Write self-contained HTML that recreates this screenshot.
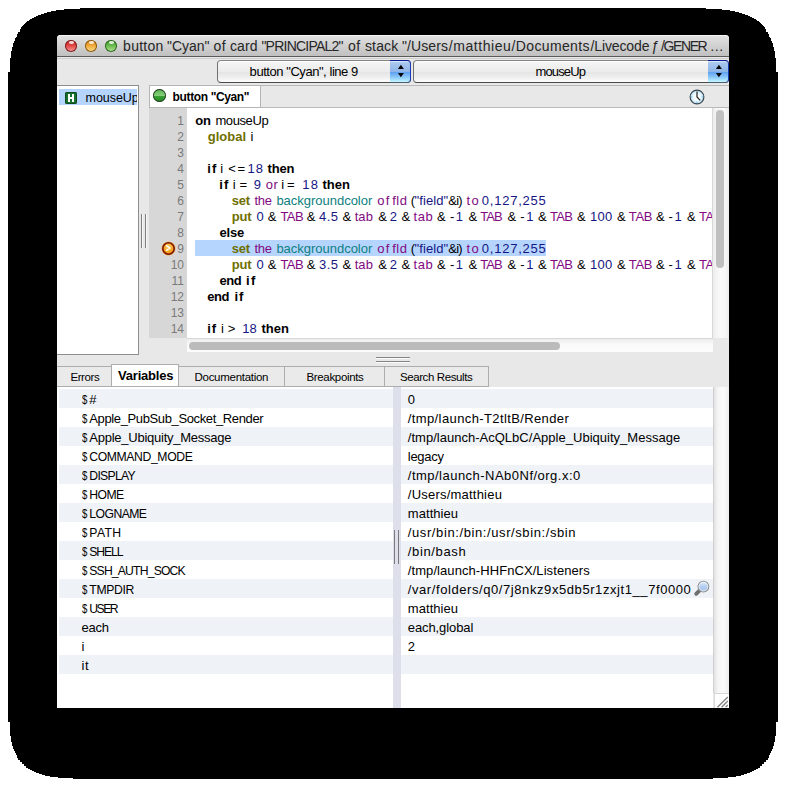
<!DOCTYPE html><html><head><meta charset="utf-8"><style>
html,body{margin:0;padding:0}
body{width:786px;height:787px;position:relative;overflow:hidden;background:#fff;font-family:"Liberation Sans",sans-serif}
.a{position:absolute}
.t{position:absolute;white-space:pre;line-height:20px;height:20px}
</style></head><body>
<svg class="a" style="left:0;top:0" width="786" height="787"><path d="M80 8h626v1h-626zM64 9h658v1h-658zM56 10h674v1h-674zM51 11h684v1h-684zM47 12h692v1h-692zM44 13h698v1h-698zM41 14h704v1h-704zM38 15h710v1h-710zM36 16h714v1h-714zM34 17h718v1h-718zM32 18h722v1h-722zM30 19h726v1h-726zM29 20h728v1h-728zM27 21h732v1h-732zM26 22h734v1h-734zM25 23h736v1h-736zM24 24h738v1h-738zM23 25h740v1h-740zM22 26h742v1h-742zM21 27h744v1h-744zM21 28h744v1h-744zM20 29h746v1h-746zM20 30h746v1h-746zM20 31h746v1h-746zM18 32h750v1h-750zM18 33h750v1h-750zM17 34h752v1h-752zM17 35h752v1h-752zM17 36h752v1h-752zM16 37h754v1h-754zM15 38h756v1h-756zM15 39h756v1h-756zM15 40h756v1h-756zM14 41h758v1h-758zM14 42h758v1h-758zM13 43h760v1h-760zM13 44h760v1h-760zM13 45h760v1h-760zM13 46h760v1h-760zM12 47h762v1h-762zM12 48h762v1h-762zM12 49h762v1h-762zM12 50h762v1h-762zM11 51h764v1h-764zM11 52h764v1h-764zM11 53h764v1h-764zM11 54h764v1h-764zM11 55h764v1h-764zM11 56h764v1h-764zM11 57h764v1h-764zM10 58h766v1h-766zM10 59h766v1h-766zM10 60h766v1h-766zM10 61h766v1h-766zM10 62h766v1h-766zM10 63h766v1h-766zM10 64h766v1h-766zM10 65h766v1h-766zM10 66h766v1h-766zM10 67h766v1h-766zM10 68h766v1h-766zM10 69h766v1h-766zM10 70h766v1h-766zM10 71h766v1h-766zM8 72h770v650h-770zM10 722h766v1h-766zM10 723h766v1h-766zM10 724h766v1h-766zM10 725h766v1h-766zM10 726h766v1h-766zM10 727h766v1h-766zM10 728h766v1h-766zM10 729h766v1h-766zM10 730h766v1h-766zM10 731h766v1h-766zM10 732h766v1h-766zM10 733h766v1h-766zM10 734h766v1h-766zM10 735h766v1h-766zM11 736h764v1h-764zM11 737h764v1h-764zM11 738h764v1h-764zM11 739h764v1h-764zM11 740h764v1h-764zM11 741h764v1h-764zM12 742h762v1h-762zM12 743h762v1h-762zM12 744h762v1h-762zM12 745h762v1h-762zM13 746h760v1h-760zM13 747h760v1h-760zM13 748h760v1h-760zM14 749h758v1h-758zM14 750h758v1h-758zM15 751h756v1h-756zM15 752h756v1h-756zM16 753h754v1h-754zM16 754h754v1h-754zM17 755h752v1h-752zM17 756h752v1h-752zM17 757h752v1h-752zM18 758h750v1h-750zM18 759h750v1h-750zM20 760h746v1h-746zM20 761h746v1h-746zM22 762h742v1h-742zM22 763h742v1h-742zM24 764h738v1h-738zM24 765h738v1h-738zM26 766h734v1h-734zM26 767h734v1h-734zM28 768h730v1h-730zM30 769h726v1h-726zM32 770h722v1h-722zM34 771h718v1h-718zM36 772h714v1h-714zM39 773h708v1h-708zM42 774h702v1h-702zM45 775h696v1h-696zM50 776h686v1h-686zM58 777h670v1h-670zM73 778h640v1h-640z" fill="#000" shape-rendering="crispEdges"/></svg>
<div class="a" style="left:57px;top:35px;width:672px;height:673px;background:#e8e8e8;border-radius:4px 4px 0 0;overflow:hidden"></div>
<div class="a" style="left:57px;top:35px;width:672px;height:21px;border-radius:4px 4px 0 0;background:linear-gradient(#e2e2e2,#d8d8d8 30%,#c0c0c0 100%);border-bottom:1px solid #5a5a5a;box-shadow:inset 0 1px 0 #f6f6f6"></div>
<div class="a" style="left:57px;top:58px;width:672px;height:1px;background:#cfcfcf"></div>
<div class="a" style="left:65px;top:40px;width:12px;height:12px;border-radius:50%;background:linear-gradient(#b72525 0%,#de3d3d 40%,#ee6e6e 72%,#f6b0b0 100%);box-shadow:inset 0 0 0 1px #7a2222"></div><div class="a" style="left:68.5px;top:41.2px;width:5px;height:2.6px;border-radius:50%;background:rgba(255,255,255,.8)"></div>
<div class="a" style="left:85px;top:40px;width:12px;height:12px;border-radius:50%;background:linear-gradient(#cf7a12 0%,#eda232 40%,#f6c462 72%,#fae6a0 100%);box-shadow:inset 0 0 0 1px #8a5a14"></div><div class="a" style="left:88.5px;top:41.2px;width:5px;height:2.6px;border-radius:50%;background:rgba(255,255,255,.8)"></div>
<div class="a" style="left:105px;top:40px;width:12px;height:12px;border-radius:50%;background:linear-gradient(#3f8c2c 0%,#5fb548 40%,#8ecd6e 72%,#c6ecb0 100%);box-shadow:inset 0 0 0 1px #2f6a22"></div><div class="a" style="left:108.5px;top:41.2px;width:5px;height:2.6px;border-radius:50%;background:rgba(255,255,255,.8)"></div>
<div id="ti0" class="t" style="left:123.1px;top:35.75px;font-size:14px;color:#262626;font-weight:400;letter-spacing:0.253px;">button</div>
<div id="ti1" class="t" style="left:166.9px;top:35.75px;font-size:14px;color:#262626;font-weight:400;letter-spacing:0.015px;">"Cyan"</div>
<div id="ti2" class="t" style="left:213.4px;top:35.75px;font-size:14px;color:#262626;font-weight:400;letter-spacing:0.613px;">of</div>
<div id="ti3" class="t" style="left:230px;top:35.75px;font-size:14px;color:#262626;font-weight:400;letter-spacing:0.089px;">card</div>
<div id="ti4" class="t" style="left:261.4px;top:35.75px;font-size:14px;color:#262626;font-weight:400;letter-spacing:-0.764px;">"PRINCIPAL2"</div>
<div id="ti5" class="t" style="left:347.9px;top:35.75px;font-size:14px;color:#262626;font-weight:400;letter-spacing:0.513px;">of</div>
<div id="ti6" class="t" style="left:364.9px;top:35.75px;font-size:14px;color:#262626;font-weight:400;letter-spacing:0.178px;">stack</div>
<div id="ti7" class="t" style="left:402px;top:35.75px;font-size:14px;color:#262626;font-weight:400;letter-spacing:0.080px;">"/Users</div>
<div id="ti8" class="t" style="left:448.8px;top:35.75px;font-size:14px;color:#262626;font-weight:400;letter-spacing:0.551px;">/matthieu</div>
<div id="ti9" class="t" style="left:511.6px;top:35.75px;font-size:14px;color:#262626;font-weight:400;letter-spacing:0.344px;">/Documents</div>
<div id="ti10" class="t" style="left:590.5px;top:35.75px;font-size:14px;color:#262626;font-weight:400;letter-spacing:-0.117px;">/Livecode</div>
<div id="ti11" class="t" style="left:651.6px;top:35.75px;font-size:14px;color:#262626;font-weight:400;letter-spacing:0.000px;">ƒ</div>
<div id="ti12" class="t" style="left:661.1px;top:35.75px;font-size:14px;color:#262626;font-weight:400;letter-spacing:-1.418px;">/GENER</div>
<div id="ti13" class="t" style="left:709.8px;top:35.75px;font-size:14px;color:#262626;font-weight:400;letter-spacing:0.000px;">…</div>
<div class="a" style="left:217px;top:60px;width:192px;height:21px;border:1px solid #707070;border-top-color:#858585;border-bottom-color:#4a4a4a;border-radius:4px;background:linear-gradient(#ffffff 0,#f3f3f3 10%,#ececec 50%,#e4e4e4 52%,#f0f0f0 80%,#fdfdfd 100%);overflow:hidden"></div><div class="a" style="left:390px;top:60px;width:20px;height:21px;border-top:1px solid #0a1890;border-right:1px solid #1a38b0;border-bottom:1px solid #4a5a70;border-radius:0 4px 4px 0;background:linear-gradient(#e6f0fb 0,#a9c7ee 8%,#8fb6e9 50%,#5d9ff0 52%,#86c4f8 75%,#b6ecff 95%,#c8fbff 100%)"></div><svg class="a" style="left:397px;top:64px" width="8" height="14"><path d="M0.9 5 L3.9 0.8 L6.9 5 Z M0.9 9 L6.9 9 L3.9 13.2 Z" fill="#050505"/></svg>
<div class="a" style="left:413px;top:60px;width:314px;height:21px;border:1px solid #707070;border-top-color:#858585;border-bottom-color:#4a4a4a;border-radius:4px;background:linear-gradient(#ffffff 0,#f3f3f3 10%,#ececec 50%,#e4e4e4 52%,#f0f0f0 80%,#fdfdfd 100%);overflow:hidden"></div><div class="a" style="left:708px;top:60px;width:20px;height:21px;border-top:1px solid #0a1890;border-right:1px solid #1a38b0;border-bottom:1px solid #4a5a70;border-radius:0 4px 4px 0;background:linear-gradient(#e6f0fb 0,#a9c7ee 8%,#8fb6e9 50%,#5d9ff0 52%,#86c4f8 75%,#b6ecff 95%,#c8fbff 100%)"></div><svg class="a" style="left:715px;top:64px" width="8" height="14"><path d="M0.9 5 L3.9 0.8 L6.9 5 Z M0.9 9 L6.9 9 L3.9 13.2 Z" fill="#050505"/></svg>
<div id="pop1" class="t" style="left:249.6px;top:61.80px;font-size:13px;color:#000;font-weight:400;letter-spacing:-0.447px;">button &quot;Cyan&quot;, line 9</div>
<div id="pop2" class="t" style="left:535.5px;top:61.70px;font-size:13px;color:#000;font-weight:400;letter-spacing:-0.873px;">mouseUp</div>
<div class="a" style="left:57px;top:85px;width:81px;height:268px;background:#fff;border:1px solid #8e8e8e;border-left:none;box-sizing:content-box"></div>
<div class="a" style="left:59px;top:89px;width:78px;height:16px;background:#b5d5ff"></div>
<div class="a" style="left:65px;top:92px;width:12px;height:12px;background:#17702e;border-radius:2px;box-shadow:inset 0 0 0 1px #0c4a1c"></div>
<div class="a" style="left:68px;top:94px;width:2px;height:8px;background:#fff"></div><div class="a" style="left:72px;top:94px;width:2px;height:8px;background:#fff"></div><div class="a" style="left:69px;top:97px;width:4px;height:2px;background:#fff"></div>
<div class="a" style="left:59px;top:86px;width:78px;height:20px;overflow:hidden"><div id="list1" class="t" style="left:26.5px;top:2.17px;font-size:12.5px;color:#000;font-weight:400;letter-spacing:-0.033px;">mouseUp</div>
</div>
<div class="a" style="left:141px;top:214px;width:1px;height:34px;background:#7e7e7e;box-shadow:1px 0 0 #f8f8f8"></div><div class="a" style="left:145px;top:214px;width:1px;height:34px;background:#7e7e7e;box-shadow:1px 0 0 #f8f8f8"></div>
<div class="a" style="left:149px;top:85px;width:580px;height:21px;background:#e8e8e8;border-top:1px solid #b9b9b9;border-bottom:1px solid #b9b9b9;box-sizing:content-box"></div>
<div class="a" style="left:149px;top:85px;width:110px;height:21px;background:#fff;border:1px solid #b5b5b5"></div>
<div class="a" style="left:152.7px;top:89.4px;width:13px;height:13px;border-radius:50%;background:linear-gradient(#5cb850 0%,#6cc262 25%,#86cf7a 50%,#3aa334 53%,#2a942a 80%,#1d781d 100%);box-shadow:inset 0 0 0 1px #2c3a2c"></div>
<div id="tab1" class="t" style="left:172.6px;top:86.54px;font-size:12px;color:#000;font-weight:700;letter-spacing:-0.373px;">button &quot;Cyan&quot;</div>
<svg class="a" style="left:688.5px;top:89px" width="16" height="16" viewBox="0 0 16 16"><defs><radialGradient id="cg" cx="50%" cy="50%" r="55%"><stop offset="0" stop-color="#ffffff"/><stop offset="0.55" stop-color="#eef8ff"/><stop offset="1" stop-color="#8fd0f4"/></radialGradient></defs>
<circle cx="8" cy="8" r="6.9" fill="url(#cg)" stroke="#3c4247" stroke-width="1.1"/><circle cx="2.8" cy="8" r="0.8" fill="#7cc8f0"/><circle cx="13.2" cy="8" r="0.8" fill="#7cc8f0"/><circle cx="8" cy="13.2" r="0.8" fill="#7cc8f0"/><path d="M8 2.6 V8 L11.2 11.4" stroke="#262626" stroke-width="1.25" fill="none"/></svg>
<div class="a" style="left:150px;top:108px;width:562px;height:230px;background:#fff"></div>
<div class="a" style="left:149px;top:108px;width:38px;height:230px;background:#d7d7d7"></div>
<div class="a" style="left:195px;top:240px;width:351px;height:16px;background:#b5d5ff"></div>
<div class="a" style="left:161.5px;top:241.5px;width:13px;height:13px;border-radius:50%;background:radial-gradient(circle at 50% 40%,#ffd070 0,#f7a420 45%,#e87c00 100%);box-shadow:inset 0 0 0 1.6px #7c1500,0 0 0 0.6px #f6b060"></div>
<svg class="a" style="left:162px;top:242px" width="12" height="12"><path d="M4.6 3.7 L8 6 L4.6 8.3" stroke="#fff" stroke-width="1.5" fill="none" stroke-linecap="round" stroke-linejoin="round"/></svg>
<div class="t" style="left:150px;width:34px;text-align:right;top:110.54px;font-size:12px;color:#7a7a7a">1</div>
<div class="t" style="left:150px;width:34px;text-align:right;top:126.54px;font-size:12px;color:#7a7a7a">2</div>
<div class="t" style="left:150px;width:34px;text-align:right;top:142.54px;font-size:12px;color:#7a7a7a">3</div>
<div class="t" style="left:150px;width:34px;text-align:right;top:158.54px;font-size:12px;color:#7a7a7a">4</div>
<div class="t" style="left:150px;width:34px;text-align:right;top:174.54px;font-size:12px;color:#7a7a7a">5</div>
<div class="t" style="left:150px;width:34px;text-align:right;top:190.54px;font-size:12px;color:#7a7a7a">6</div>
<div class="t" style="left:150px;width:34px;text-align:right;top:206.54px;font-size:12px;color:#7a7a7a">7</div>
<div class="t" style="left:150px;width:34px;text-align:right;top:222.54px;font-size:12px;color:#7a7a7a">8</div>
<div class="t" style="left:150px;width:34px;text-align:right;top:238.54px;font-size:12px;color:#7a7a7a">9</div>
<div class="t" style="left:150px;width:34px;text-align:right;top:254.54px;font-size:12px;color:#7a7a7a">10</div>
<div class="t" style="left:150px;width:34px;text-align:right;top:270.54px;font-size:12px;color:#7a7a7a">11</div>
<div class="t" style="left:150px;width:34px;text-align:right;top:286.54px;font-size:12px;color:#7a7a7a">12</div>
<div class="t" style="left:150px;width:34px;text-align:right;top:302.54px;font-size:12px;color:#7a7a7a">13</div>
<div class="t" style="left:150px;width:34px;text-align:right;top:318.54px;font-size:12px;color:#7a7a7a">14</div>
<div class="a" style="left:187px;top:108px;width:525px;height:230px;overflow:hidden">
<div id="c1_0" class="t" style="left:8.199999999999989px;top:3.20px;font-size:13px;color:#000;font-weight:700;letter-spacing:-0.191px;">on</div>
<div id="c1_1" class="t" style="left:28.400000000000006px;top:3.20px;font-size:13px;color:#000;font-weight:400;letter-spacing:-0.390px;">mouseUp</div>
<div id="c2_0" class="t" style="left:20.80000000000001px;top:19.20px;font-size:13px;color:#6f6f00;font-weight:700;letter-spacing:0.004px;">global</div>
<div id="c2_1" class="t" style="left:63.400000000000006px;top:19.20px;font-size:13px;color:#000;font-weight:400;letter-spacing:0.000px;">i</div>
<div id="c4_0" class="t" style="left:20.30000000000001px;top:51.20px;font-size:13px;color:#000;font-weight:700;letter-spacing:1.047px;">if</div>
<div id="c4_1" class="t" style="left:33.30000000000001px;top:51.20px;font-size:13px;color:#000;font-weight:400;letter-spacing:0.000px;">i</div>
<div id="c4_2" class="t" style="left:41.30000000000001px;top:51.20px;font-size:13px;color:#000;font-weight:400;letter-spacing:1.500px;">&lt;=</div>
<div id="c4_3" class="t" style="left:60.400000000000006px;top:51.20px;font-size:13px;color:#161684;font-weight:400;letter-spacing:1.231px;">18</div>
<div id="c4_4" class="t" style="left:80.60000000000002px;top:51.20px;font-size:13px;color:#000;font-weight:700;letter-spacing:-0.184px;">then</div>
<div id="c5_0" class="t" style="left:32.30000000000001px;top:67.20px;font-size:13px;color:#000;font-weight:700;letter-spacing:1.047px;">if</div>
<div id="c5_1" class="t" style="left:45.69999999999999px;top:67.20px;font-size:13px;color:#000;font-weight:400;letter-spacing:0.000px;">i</div>
<div id="c5_2" class="t" style="left:52.400000000000006px;top:67.20px;font-size:13px;color:#000;font-weight:400;letter-spacing:0.000px;">=</div>
<div id="c5_3" class="t" style="left:66.69999999999999px;top:67.20px;font-size:13px;color:#161684;font-weight:400;letter-spacing:0.000px;">9</div>
<div id="c5_4" class="t" style="left:78.69999999999999px;top:67.20px;font-size:13px;color:#820a82;font-weight:400;letter-spacing:0.638px;">or</div>
<div id="c5_5" class="t" style="left:94.30000000000001px;top:67.20px;font-size:13px;color:#000;font-weight:400;letter-spacing:0.000px;">i</div>
<div id="c5_6" class="t" style="left:100px;top:67.20px;font-size:13px;color:#000;font-weight:400;letter-spacing:0.000px;">=</div>
<div id="c5_7" class="t" style="left:115.30000000000001px;top:67.20px;font-size:13px;color:#161684;font-weight:400;letter-spacing:1.231px;">18</div>
<div id="c5_8" class="t" style="left:135.39999999999998px;top:67.20px;font-size:13px;color:#000;font-weight:700;letter-spacing:0.016px;">then</div>
<div id="c6_0" class="t" style="left:44.69999999999999px;top:83.20px;font-size:13px;color:#6f6f00;font-weight:700;letter-spacing:-0.148px;">set</div>
<div id="c6_1" class="t" style="left:67.5px;top:83.20px;font-size:13px;color:#820a82;font-weight:400;letter-spacing:-0.289px;">the</div>
<div id="c6_2" class="t" style="left:89.39999999999998px;top:83.20px;font-size:13px;color:#0e8080;font-weight:400;letter-spacing:-0.016px;">backgroundcolor</div>
<div id="c6_3" class="t" style="left:190.2px;top:83.20px;font-size:13px;color:#820a82;font-weight:400;letter-spacing:1.456px;">of</div>
<div id="c6_4" class="t" style="left:205.2px;top:83.20px;font-size:13px;color:#820a82;font-weight:400;letter-spacing:0.533px;">fld</div>
<div id="c6_5" class="t" style="left:223.8px;top:83.20px;font-size:13px;color:#000;font-weight:400;letter-spacing:0.000px;">(</div>
<div id="c6_6" class="t" style="left:227.60000000000002px;top:83.20px;font-size:13px;color:#161684;font-weight:400;letter-spacing:0.087px;">"field"</div>
<div id="c6_7" class="t" style="left:261.2px;top:83.20px;font-size:13px;color:#000;font-weight:400;letter-spacing:-0.695px;">&amp;i)</div>
<div id="c6_8" class="t" style="left:279.5px;top:83.20px;font-size:13px;color:#820a82;font-weight:400;letter-spacing:1.456px;">to</div>
<div id="c6_9" class="t" style="left:294.8px;top:83.20px;font-size:13px;color:#161684;font-weight:400;letter-spacing:0.770px;">0,127,255</div>
<div id="c7_0" class="t" style="left:44.69999999999999px;top:99.20px;font-size:13px;color:#6f6f00;font-weight:700;letter-spacing:-0.109px;">put</div>
<div id="c7_1" class="t" style="left:69.39999999999998px;top:99.20px;font-size:13px;color:#161684;font-weight:400;letter-spacing:0.000px;">0</div>
<div id="c7_2" class="t" style="left:80.69999999999999px;top:99.20px;font-size:13px;color:#000;font-weight:400;letter-spacing:0.000px;">&amp;</div>
<div id="c7_3" class="t" style="left:93.5px;top:99.20px;font-size:13px;color:#820a82;font-weight:400;letter-spacing:-0.614px;">TAB</div>
<div id="c7_4" class="t" style="left:119.80000000000001px;top:99.20px;font-size:13px;color:#000;font-weight:400;letter-spacing:0.000px;">&amp;</div>
<div id="c7_5" class="t" style="left:132.0px;top:99.20px;font-size:13px;color:#161684;font-weight:400;letter-spacing:0.511px;">4.5</div>
<div id="c7_6" class="t" style="left:155.5px;top:99.20px;font-size:13px;color:#000;font-weight:400;letter-spacing:0.000px;">&amp;</div>
<div id="c7_7" class="t" style="left:167.7px;top:99.20px;font-size:13px;color:#820a82;font-weight:400;letter-spacing:0.061px;">tab</div>
<div id="c7_8" class="t" style="left:191.2px;top:99.20px;font-size:13px;color:#000;font-weight:400;letter-spacing:0.000px;">&amp;</div>
<div id="c7_9" class="t" style="left:202.8px;top:99.20px;font-size:13px;color:#161684;font-weight:400;letter-spacing:0.000px;">2</div>
<div id="c7_10" class="t" style="left:214.39999999999998px;top:99.20px;font-size:13px;color:#000;font-weight:400;letter-spacing:0.000px;">&amp;</div>
<div id="c7_11" class="t" style="left:226.60000000000002px;top:99.20px;font-size:13px;color:#820a82;font-weight:400;letter-spacing:0.561px;">tab</div>
<div id="c7_12" class="t" style="left:250.10000000000002px;top:99.20px;font-size:13px;color:#000;font-weight:400;letter-spacing:0.000px;">&amp;</div>
<div id="c7_13" class="t" style="left:263px;top:99.20px;font-size:13px;color:#000;font-weight:400;letter-spacing:1.500px;"><span style="color:#000">-</span><span style="color:#161684">1</span></div>
<div id="c7_14" class="t" style="left:281.4px;top:99.20px;font-size:13px;color:#000;font-weight:400;letter-spacing:0.000px;">&amp;</div>
<div id="c7_15" class="t" style="left:293.3px;top:99.20px;font-size:13px;color:#820a82;font-weight:400;letter-spacing:-0.914px;">TAB</div>
<div id="c7_16" class="t" style="left:320.4px;top:99.20px;font-size:13px;color:#000;font-weight:400;letter-spacing:0.000px;">&amp;</div>
<div id="c7_17" class="t" style="left:333.29999999999995px;top:99.20px;font-size:13px;color:#000;font-weight:400;letter-spacing:1.500px;"><span style="color:#000">-</span><span style="color:#161684">1</span></div>
<div id="c7_18" class="t" style="left:351.1px;top:99.20px;font-size:13px;color:#000;font-weight:400;letter-spacing:0.000px;">&amp;</div>
<div id="c7_19" class="t" style="left:363px;top:99.20px;font-size:13px;color:#820a82;font-weight:400;letter-spacing:-0.664px;">TAB</div>
<div id="c7_20" class="t" style="left:390px;top:99.20px;font-size:13px;color:#000;font-weight:400;letter-spacing:0.000px;">&amp;</div>
<div id="c7_21" class="t" style="left:403px;top:99.20px;font-size:13px;color:#161684;font-weight:400;letter-spacing:0.298px;">100</div>
<div id="c7_22" class="t" style="left:430px;top:99.20px;font-size:13px;color:#000;font-weight:400;letter-spacing:0.000px;">&amp;</div>
<div id="c7_23" class="t" style="left:441.79999999999995px;top:99.20px;font-size:13px;color:#820a82;font-weight:400;letter-spacing:-0.314px;">TAB</div>
<div id="c7_24" class="t" style="left:469.1px;top:99.20px;font-size:13px;color:#000;font-weight:400;letter-spacing:0.000px;">&amp;</div>
<div id="c7_25" class="t" style="left:481.6px;top:99.20px;font-size:13px;color:#000;font-weight:400;letter-spacing:1.500px;"><span style="color:#000">-</span><span style="color:#161684">1</span></div>
<div id="c7_26" class="t" style="left:500.1px;top:99.20px;font-size:13px;color:#000;font-weight:400;letter-spacing:0.000px;">&amp;</div>
<div id="c7_27" class="t" style="left:511.9px;top:99.20px;font-size:13px;color:#820a82;font-weight:400;letter-spacing:-0.414px;">TAB</div>
<div id="c8_0" class="t" style="left:32.400000000000006px;top:115.20px;font-size:13px;color:#000;font-weight:700;letter-spacing:-0.138px;">else</div>
<div id="c9_0" class="t" style="left:44.69999999999999px;top:131.20px;font-size:13px;color:#6f6f00;font-weight:700;letter-spacing:-0.148px;">set</div>
<div id="c9_1" class="t" style="left:67.5px;top:131.20px;font-size:13px;color:#820a82;font-weight:400;letter-spacing:-0.289px;">the</div>
<div id="c9_2" class="t" style="left:89.39999999999998px;top:131.20px;font-size:13px;color:#0e8080;font-weight:400;letter-spacing:-0.016px;">backgroundcolor</div>
<div id="c9_3" class="t" style="left:190.2px;top:131.20px;font-size:13px;color:#820a82;font-weight:400;letter-spacing:1.456px;">of</div>
<div id="c9_4" class="t" style="left:205.2px;top:131.20px;font-size:13px;color:#820a82;font-weight:400;letter-spacing:0.533px;">fld</div>
<div id="c9_5" class="t" style="left:223.8px;top:131.20px;font-size:13px;color:#000;font-weight:400;letter-spacing:0.000px;">(</div>
<div id="c9_6" class="t" style="left:227.60000000000002px;top:131.20px;font-size:13px;color:#161684;font-weight:400;letter-spacing:0.087px;">"field"</div>
<div id="c9_7" class="t" style="left:261.2px;top:131.20px;font-size:13px;color:#000;font-weight:400;letter-spacing:-0.695px;">&amp;i)</div>
<div id="c9_8" class="t" style="left:279.5px;top:131.20px;font-size:13px;color:#820a82;font-weight:400;letter-spacing:1.456px;">to</div>
<div id="c9_9" class="t" style="left:294.8px;top:131.20px;font-size:13px;color:#161684;font-weight:400;letter-spacing:0.770px;">0,127,255</div>
<div id="c10_0" class="t" style="left:44.69999999999999px;top:147.20px;font-size:13px;color:#6f6f00;font-weight:700;letter-spacing:-0.109px;">put</div>
<div id="c10_1" class="t" style="left:69.39999999999998px;top:147.20px;font-size:13px;color:#161684;font-weight:400;letter-spacing:0.000px;">0</div>
<div id="c10_2" class="t" style="left:80.69999999999999px;top:147.20px;font-size:13px;color:#000;font-weight:400;letter-spacing:0.000px;">&amp;</div>
<div id="c10_3" class="t" style="left:93.5px;top:147.20px;font-size:13px;color:#820a82;font-weight:400;letter-spacing:-0.614px;">TAB</div>
<div id="c10_4" class="t" style="left:119.80000000000001px;top:147.20px;font-size:13px;color:#000;font-weight:400;letter-spacing:0.000px;">&amp;</div>
<div id="c10_5" class="t" style="left:132.0px;top:147.20px;font-size:13px;color:#161684;font-weight:400;letter-spacing:0.511px;">3.5</div>
<div id="c10_6" class="t" style="left:155.5px;top:147.20px;font-size:13px;color:#000;font-weight:400;letter-spacing:0.000px;">&amp;</div>
<div id="c10_7" class="t" style="left:167.7px;top:147.20px;font-size:13px;color:#820a82;font-weight:400;letter-spacing:0.061px;">tab</div>
<div id="c10_8" class="t" style="left:191.2px;top:147.20px;font-size:13px;color:#000;font-weight:400;letter-spacing:0.000px;">&amp;</div>
<div id="c10_9" class="t" style="left:202.8px;top:147.20px;font-size:13px;color:#161684;font-weight:400;letter-spacing:0.000px;">2</div>
<div id="c10_10" class="t" style="left:214.39999999999998px;top:147.20px;font-size:13px;color:#000;font-weight:400;letter-spacing:0.000px;">&amp;</div>
<div id="c10_11" class="t" style="left:226.60000000000002px;top:147.20px;font-size:13px;color:#820a82;font-weight:400;letter-spacing:0.561px;">tab</div>
<div id="c10_12" class="t" style="left:250.10000000000002px;top:147.20px;font-size:13px;color:#000;font-weight:400;letter-spacing:0.000px;">&amp;</div>
<div id="c10_13" class="t" style="left:263px;top:147.20px;font-size:13px;color:#000;font-weight:400;letter-spacing:1.500px;"><span style="color:#000">-</span><span style="color:#161684">1</span></div>
<div id="c10_14" class="t" style="left:281.4px;top:147.20px;font-size:13px;color:#000;font-weight:400;letter-spacing:0.000px;">&amp;</div>
<div id="c10_15" class="t" style="left:293.3px;top:147.20px;font-size:13px;color:#820a82;font-weight:400;letter-spacing:-0.914px;">TAB</div>
<div id="c10_16" class="t" style="left:320.4px;top:147.20px;font-size:13px;color:#000;font-weight:400;letter-spacing:0.000px;">&amp;</div>
<div id="c10_17" class="t" style="left:333.29999999999995px;top:147.20px;font-size:13px;color:#000;font-weight:400;letter-spacing:1.500px;"><span style="color:#000">-</span><span style="color:#161684">1</span></div>
<div id="c10_18" class="t" style="left:351.1px;top:147.20px;font-size:13px;color:#000;font-weight:400;letter-spacing:0.000px;">&amp;</div>
<div id="c10_19" class="t" style="left:363px;top:147.20px;font-size:13px;color:#820a82;font-weight:400;letter-spacing:-0.664px;">TAB</div>
<div id="c10_20" class="t" style="left:390px;top:147.20px;font-size:13px;color:#000;font-weight:400;letter-spacing:0.000px;">&amp;</div>
<div id="c10_21" class="t" style="left:403px;top:147.20px;font-size:13px;color:#161684;font-weight:400;letter-spacing:0.298px;">100</div>
<div id="c10_22" class="t" style="left:430px;top:147.20px;font-size:13px;color:#000;font-weight:400;letter-spacing:0.000px;">&amp;</div>
<div id="c10_23" class="t" style="left:441.79999999999995px;top:147.20px;font-size:13px;color:#820a82;font-weight:400;letter-spacing:-0.314px;">TAB</div>
<div id="c10_24" class="t" style="left:469.1px;top:147.20px;font-size:13px;color:#000;font-weight:400;letter-spacing:0.000px;">&amp;</div>
<div id="c10_25" class="t" style="left:481.6px;top:147.20px;font-size:13px;color:#000;font-weight:400;letter-spacing:1.500px;"><span style="color:#000">-</span><span style="color:#161684">1</span></div>
<div id="c10_26" class="t" style="left:500.1px;top:147.20px;font-size:13px;color:#000;font-weight:400;letter-spacing:0.000px;">&amp;</div>
<div id="c10_27" class="t" style="left:511.9px;top:147.20px;font-size:13px;color:#820a82;font-weight:400;letter-spacing:-0.414px;">TAB</div>
<div id="c11_0" class="t" style="left:32.400000000000006px;top:163.20px;font-size:13px;color:#000;font-weight:700;letter-spacing:-0.462px;">end</div>
<div id="c11_1" class="t" style="left:59.099999999999994px;top:163.20px;font-size:13px;color:#000;font-weight:700;letter-spacing:1.247px;">if</div>
<div id="c12_0" class="t" style="left:20.19999999999999px;top:179.20px;font-size:13px;color:#000;font-weight:700;letter-spacing:-0.462px;">end</div>
<div id="c12_1" class="t" style="left:47.400000000000006px;top:179.20px;font-size:13px;color:#000;font-weight:700;letter-spacing:1.047px;">if</div>
<div id="c14_0" class="t" style="left:20.19999999999999px;top:211.20px;font-size:13px;color:#000;font-weight:700;letter-spacing:1.047px;">if</div>
<div id="c14_1" class="t" style="left:34px;top:211.20px;font-size:13px;color:#000;font-weight:400;letter-spacing:0.000px;">i</div>
<div id="c14_2" class="t" style="left:40.80000000000001px;top:211.20px;font-size:13px;color:#000;font-weight:400;letter-spacing:0.000px;">&gt;</div>
<div id="c14_3" class="t" style="left:55.30000000000001px;top:211.20px;font-size:13px;color:#161684;font-weight:400;letter-spacing:0.031px;">18</div>
<div id="c14_4" class="t" style="left:74.39999999999998px;top:211.20px;font-size:13px;color:#000;font-weight:700;letter-spacing:0.016px;">then</div>
</div>
<div class="a" style="left:712px;top:108px;width:17px;height:230px;background:linear-gradient(90deg,#d8d8d8 0,#d8d8d8 6%,#ececec 6.2%,#f2f2f2 22%,#fafafa 50%,#f6f6f6 80%,#ececec 100%)"></div>
<div class="a" style="left:716px;top:110px;width:8px;height:157.5px;border-radius:4px;background:#bfbfbf"></div>
<div class="a" style="left:187px;top:338px;width:526px;height:14px;background:linear-gradient(#d8d8d8 0,#d8d8d8 7%,#ececec 7.2%,#f2f2f2 22%,#fafafa 50%,#fcfcfc 100%)"></div>
<div class="a" style="left:189px;top:342px;width:371px;height:8px;border-radius:4px;background:#bbbbbb"></div>
<div class="a" style="left:376px;top:357px;width:34px;height:1px;background:#858585;box-shadow:0 1px 0 #fafafa"></div><div class="a" style="left:376px;top:361px;width:34px;height:1px;background:#858585;box-shadow:0 1px 0 #fafafa"></div>
<div class="a" style="left:57px;top:366px;width:55px;height:20px;background:#eaeaea;border:1px solid #adadad;border-bottom:none;border-left:none;box-sizing:border-box"></div>
<div id="tabErr" class="t" style="left:70.4px;top:366.62px;font-size:11.5px;color:#000;font-weight:400;letter-spacing:-0.402px;">Errors</div>
<div class="a" style="left:178px;top:366px;width:107px;height:20px;background:#eaeaea;border:1px solid #adadad;border-bottom:none;box-sizing:border-box"></div>
<div id="tabDoc" class="t" style="left:194.5px;top:366.62px;font-size:11.5px;color:#000;font-weight:400;letter-spacing:-0.280px;">Documentation</div>
<div class="a" style="left:284px;top:366px;width:101px;height:20px;background:#eaeaea;border:1px solid #adadad;border-bottom:none;box-sizing:border-box"></div>
<div id="tabBrk" class="t" style="left:306.5px;top:366.62px;font-size:11.5px;color:#000;font-weight:400;letter-spacing:-0.343px;">Breakpoints</div>
<div class="a" style="left:384px;top:366px;width:105px;height:20px;background:#eaeaea;border:1px solid #adadad;border-bottom:none;box-sizing:border-box"></div>
<div id="tabSR" class="t" style="left:399.9px;top:366.62px;font-size:11.5px;color:#000;font-weight:400;letter-spacing:-0.391px;">Search Results</div>
<div class="a" style="left:111px;top:364px;width:68px;height:22px;background:#fff;border:1px solid #adadad;border-bottom:none;box-sizing:border-box"></div>
<div class="a" style="left:57px;top:386px;width:432px;height:1px;background:#adadad"></div>
<div id="tabVar" class="t" style="left:118px;top:366.10px;font-size:13px;color:#000;font-weight:700;letter-spacing:-0.201px;">Variables</div>
<div class="a" style="left:57px;top:387px;width:656px;height:321px;background:#fff"></div>
<div class="a" style="left:59px;top:389px;width:654px;height:19px;background:#eff2f7"></div>
<div class="a" style="left:59px;top:427px;width:654px;height:19px;background:#eff2f7"></div>
<div class="a" style="left:59px;top:465px;width:654px;height:19px;background:#eff2f7"></div>
<div class="a" style="left:59px;top:503px;width:654px;height:19px;background:#eff2f7"></div>
<div class="a" style="left:59px;top:541px;width:654px;height:19px;background:#eff2f7"></div>
<div class="a" style="left:59px;top:579px;width:654px;height:19px;background:#eff2f7"></div>
<div class="a" style="left:59px;top:617px;width:654px;height:19px;background:#eff2f7"></div>
<div class="a" style="left:59px;top:655px;width:654px;height:19px;background:#eff2f7"></div>
<div id="vkd0" class="t" style="left:81.7px;top:389.90px;font-size:13px;color:#000;font-weight:400;letter-spacing:0.000px;transform:scaleX(0.74);transform-origin:0 0">$</div>
<div id="vk0" class="t" style="left:89.3px;top:389.90px;font-size:13px;color:#000;font-weight:400;letter-spacing:0.000px;">#</div>
<div id="vv0" class="t" style="left:407.8px;top:389.90px;font-size:13px;color:#000;font-weight:400;letter-spacing:0.000px;">0</div>
<div id="vkd1" class="t" style="left:81.7px;top:408.90px;font-size:13px;color:#000;font-weight:400;letter-spacing:0.000px;transform:scaleX(0.74);transform-origin:0 0">$</div>
<div id="vk1" class="t" style="left:89.3px;top:408.90px;font-size:13px;color:#000;font-weight:400;letter-spacing:-0.372px;">Apple_PubSub_Socket_Render</div>
<div id="vv1" class="t" style="left:407.8px;top:408.90px;font-size:13px;color:#000;font-weight:400;letter-spacing:0.386px;">/tmp/launch-T2tltB/Render</div>
<div id="vkd2" class="t" style="left:81.7px;top:427.90px;font-size:13px;color:#000;font-weight:400;letter-spacing:0.000px;transform:scaleX(0.74);transform-origin:0 0">$</div>
<div id="vk2" class="t" style="left:89.3px;top:427.90px;font-size:13px;color:#000;font-weight:400;letter-spacing:-0.249px;">Apple_Ubiquity_Message</div>
<div id="vv2" class="t" style="left:407.8px;top:427.90px;font-size:13px;color:#000;font-weight:400;letter-spacing:0.017px;">/tmp/launch-AcQLbC/Apple_Ubiquity_Message</div>
<div id="vkd3" class="t" style="left:81.7px;top:446.90px;font-size:13px;color:#000;font-weight:400;letter-spacing:0.000px;transform:scaleX(0.74);transform-origin:0 0">$</div>
<div id="vk3" class="t" style="left:89.3px;top:447.17px;font-size:12.2px;color:#000;font-weight:400;letter-spacing:-0.379px;">COMMAND_MODE</div>
<div id="vv3" class="t" style="left:407.8px;top:446.90px;font-size:13px;color:#000;font-weight:400;letter-spacing:-0.296px;">legacy</div>
<div id="vkd4" class="t" style="left:81.7px;top:465.90px;font-size:13px;color:#000;font-weight:400;letter-spacing:0.000px;transform:scaleX(0.74);transform-origin:0 0">$</div>
<div id="vk4" class="t" style="left:89.3px;top:466.17px;font-size:12.2px;color:#000;font-weight:400;letter-spacing:-0.713px;">DISPLAY</div>
<div id="vv4" class="t" style="left:407.8px;top:465.90px;font-size:13px;color:#000;font-weight:400;letter-spacing:0.480px;">/tmp/launch-NAb0Nf/org.x:0</div>
<div id="vkd5" class="t" style="left:81.7px;top:484.90px;font-size:13px;color:#000;font-weight:400;letter-spacing:0.000px;transform:scaleX(0.74);transform-origin:0 0">$</div>
<div id="vk5" class="t" style="left:89.3px;top:485.17px;font-size:12.2px;color:#000;font-weight:400;letter-spacing:-0.588px;">HOME</div>
<div id="vv5" class="t" style="left:407.8px;top:484.90px;font-size:13px;color:#000;font-weight:400;letter-spacing:0.218px;">/Users/matthieu</div>
<div id="vkd6" class="t" style="left:81.7px;top:503.90px;font-size:13px;color:#000;font-weight:400;letter-spacing:0.000px;transform:scaleX(0.74);transform-origin:0 0">$</div>
<div id="vk6" class="t" style="left:89.3px;top:504.17px;font-size:12.2px;color:#000;font-weight:400;letter-spacing:-0.542px;">LOGNAME</div>
<div id="vv6" class="t" style="left:407.8px;top:503.90px;font-size:13px;color:#000;font-weight:400;letter-spacing:0.061px;">matthieu</div>
<div id="vkd7" class="t" style="left:81.7px;top:522.90px;font-size:13px;color:#000;font-weight:400;letter-spacing:0.000px;transform:scaleX(0.74);transform-origin:0 0">$</div>
<div id="vk7" class="t" style="left:89.3px;top:523.17px;font-size:12.2px;color:#000;font-weight:400;letter-spacing:0.366px;">PATH</div>
<div id="vv7" class="t" style="left:407.8px;top:522.90px;font-size:13px;color:#000;font-weight:400;letter-spacing:0.599px;">/usr/bin:/bin:/usr/sbin:/sbin</div>
<div id="vkd8" class="t" style="left:81.7px;top:541.90px;font-size:13px;color:#000;font-weight:400;letter-spacing:0.000px;transform:scaleX(0.74);transform-origin:0 0">$</div>
<div id="vk8" class="t" style="left:89.3px;top:542.17px;font-size:12.2px;color:#000;font-weight:400;letter-spacing:-1.081px;">SHELL</div>
<div id="vv8" class="t" style="left:407.8px;top:541.90px;font-size:13px;color:#000;font-weight:400;letter-spacing:0.642px;">/bin/bash</div>
<div id="vkd9" class="t" style="left:81.7px;top:560.90px;font-size:13px;color:#000;font-weight:400;letter-spacing:0.000px;transform:scaleX(0.74);transform-origin:0 0">$</div>
<div id="vk9" class="t" style="left:89.3px;top:561.17px;font-size:12.2px;color:#000;font-weight:400;letter-spacing:-0.829px;">SSH_AUTH_SOCK</div>
<div id="vv9" class="t" style="left:407.8px;top:560.90px;font-size:13px;color:#000;font-weight:400;letter-spacing:0.074px;">/tmp/launch-HHFnCX/Listeners</div>
<div id="vkd10" class="t" style="left:81.7px;top:579.90px;font-size:13px;color:#000;font-weight:400;letter-spacing:0.000px;transform:scaleX(0.74);transform-origin:0 0">$</div>
<div id="vk10" class="t" style="left:89.3px;top:580.17px;font-size:12.2px;color:#000;font-weight:400;letter-spacing:-0.344px;">TMPDIR</div>
<div id="vv10" class="t" style="left:407.8px;top:579.90px;font-size:13px;color:#000;font-weight:400;letter-spacing:0.578px;">/var/folders/q0/7j8nkz9x5db5r1zxjt1__7f0000</div>
<div id="vkd11" class="t" style="left:81.7px;top:598.90px;font-size:13px;color:#000;font-weight:400;letter-spacing:0.000px;transform:scaleX(0.74);transform-origin:0 0">$</div>
<div id="vk11" class="t" style="left:89.3px;top:599.17px;font-size:12.2px;color:#000;font-weight:400;letter-spacing:-1.500px;">USER</div>
<div id="vv11" class="t" style="left:407.8px;top:598.90px;font-size:13px;color:#000;font-weight:400;letter-spacing:0.061px;">matthieu</div>
<div id="vk12" class="t" style="left:81.6px;top:617.90px;font-size:13px;color:#000;font-weight:400;letter-spacing:-0.301px;">each</div>
<div id="vv12" class="t" style="left:407.8px;top:617.90px;font-size:13px;color:#000;font-weight:400;letter-spacing:-0.100px;">each,global</div>
<div id="vk13" class="t" style="left:81.6px;top:636.90px;font-size:13px;color:#000;font-weight:400;letter-spacing:0.000px;">i</div>
<div id="vv13" class="t" style="left:407.8px;top:636.90px;font-size:13px;color:#000;font-weight:400;letter-spacing:0.000px;">2</div>
<div id="vk14" class="t" style="left:81.6px;top:655.90px;font-size:13px;color:#000;font-weight:400;letter-spacing:0.400px;">it</div>
<div class="a" style="left:393px;top:387px;width:8px;height:321px;background:#dde0ea"></div>
<div class="a" style="left:394px;top:530px;width:1px;height:34px;background:#7a7a7a"></div><div class="a" style="left:398px;top:530px;width:1px;height:34px;background:#7a7a7a"></div>
<svg class="a" style="left:693px;top:579px" width="18" height="18" viewBox="0 0 18 18"><defs><linearGradient id="mg" x1="0" y1="0" x2="0" y2="1"><stop offset="0" stop-color="#e4f0ff"/><stop offset="0.5" stop-color="#b4cdf0"/><stop offset="1" stop-color="#a8c4ee"/></linearGradient></defs>
<path d="M6.4 11.6 L3.2 14.8" stroke="#6e6e6e" stroke-width="3.8" stroke-linecap="round"/><circle cx="10.4" cy="7.6" r="5.4" fill="url(#mg)" stroke="#8e8e8e" stroke-width="1.1"/><circle cx="10.4" cy="7.6" r="4.4" fill="none" stroke="#ffffff" stroke-opacity="0.7" stroke-width="0.8"/></svg>
<div class="a" style="left:713px;top:387px;width:16px;height:306px;background:linear-gradient(90deg,#e2e2e2,#f4f4f4 25%,#fbfbfb 60%,#ededed);border-left:1px solid #d0d0d0;box-sizing:border-box"></div>
<div class="a" style="left:714px;top:693px;width:15px;height:15px;background:#fdfdfd;border-left:1px solid #dadada;border-top:1px solid #d6d6d6;box-sizing:border-box"></div>
<svg class="a" style="left:713px;top:693px" width="16" height="15"><path d="M4.5 14.2 L14.8 4 M8.6 14.2 L14.8 8 M12.6 14.2 L14.8 12" stroke="#808080" stroke-width="1.3"/></svg>
</body></html>
